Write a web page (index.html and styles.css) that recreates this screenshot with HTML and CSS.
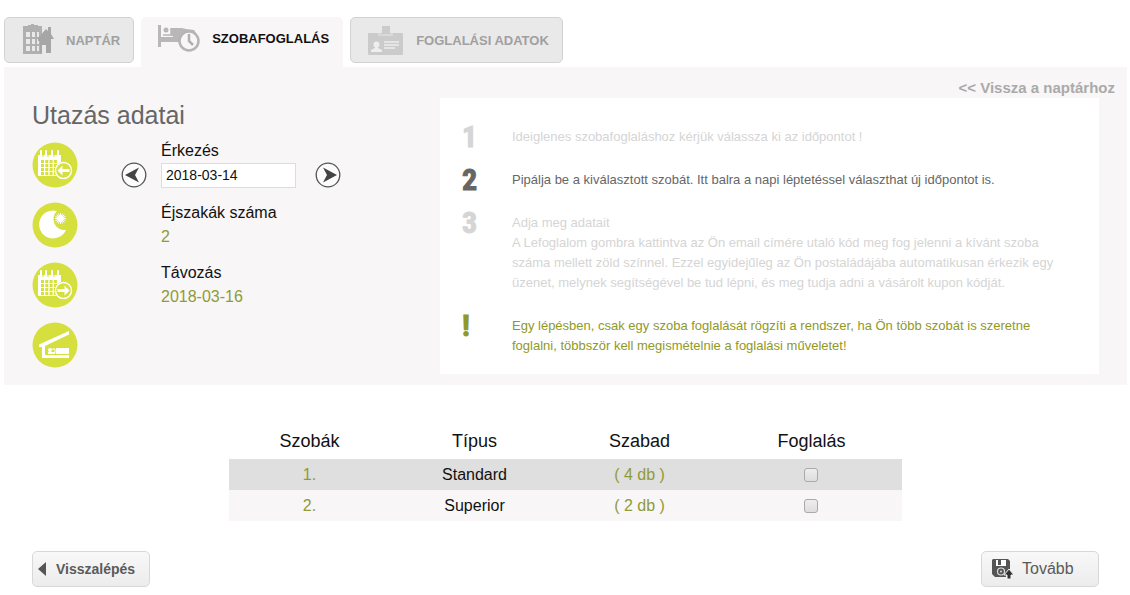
FILE: index.html
```html
<!DOCTYPE html>
<html lang="hu">
<head>
    <meta charset="UTF-8">
    <meta name="viewport" content="width=device-width, initial-scale=1.0">
    <title>Szobafoglalás</title>
    <link rel="stylesheet" href="styles.css">
</head>
<body>
    <nav class="tabs">
        <a class="tab" href="#naptar">
            <svg class="tab-icon" width="32" height="32" viewBox="0 0 32 32">
                <path fill="#b0b0b0" d="M1 2h5V1h3V0h3v1h4v1h4v28H1z"/>
                <path fill="#e9e9e9" d="M4 8h4v5H4zM10 8h3v5h-3zM15 8h2v5h-2zM4 15h4v5H4zM10 15h3v5h-3zM15 15h2v5h-2zM4 22h4v5H4zM10 22h3v5h-3zM15 22h2v5h-2z"/>
                <path fill="#a6a6a6" d="M16 14l8-9 2 2V3h3v7l3 5h-3v14h-5v-8h-4v8h-2V17h-2z"/>
            </svg>
            NAPTÁR
        </a>
        <a class="tab active" href="#szoba">
            <svg class="tab-icon" width="42" height="28" viewBox="0 0 42 28">
                <path fill="#b8b8b8" d="M0 1h3v12h19l3 5H3v5H0z"/>
                <path fill="#b8b8b8" d="M13 4h11l4 1 8 1 2 3H15v3h-2z"/>
                <path fill="#b8b8b8" d="M15 7h14v7H15z"/>
                <circle cx="8" cy="6" r="2.500" fill="#b8b8b8"/>
                <path fill="none" stroke="#b8b8b8" stroke-width="1.500" d="M5 11h8V4"/>
                <circle cx="31" cy="17" r="9.500" fill="#f8f6f7" stroke="#b5b5b5" stroke-width="2.500"/>
                <path fill="none" stroke="#b0b0b0" stroke-width="2.500" d="M31 10v7l4 4"/>
            </svg>
            SZOBAFOGLALÁS
        </a>
        <a class="tab" href="#adatok">
            <svg class="tab-icon" width="36" height="30" viewBox="0 0 36 30">
                <path fill="#cbcbcb" d="M14 1h8v10h-8z"/>
                <rect x="0" y="8" width="35" height="22" rx="1" fill="#cbcbcb"/>
                <path fill="none" stroke="#dedede" stroke-width="1.500" d="M11 8v2h13V8"/>
                <circle cx="8.500" cy="19.500" r="3" fill="#eee"/>
                <path fill="#eee" d="M7 21h3v2l4 2v2H3v-2l4-2z"/>
                <path fill="none" stroke="#eee" stroke-width="1.700" d="M16 17h15M16 20h15M16 23h11"/>
            </svg>
            FOGLALÁSI ADATOK
        </a>
    </nav>

    <section class="panel">
        <div class="back">
            <a href="#naptar">&lt;&lt; Vissza a naptárhoz</a>
        </div>
        <div class="panel-content">
            <div class="trip">
                <h2>Utazás adatai</h2>
                <div class="trip-row">
                    <svg class="round" viewBox="0 0 46 46">
                        <circle cx="23" cy="23" r="22.500" fill="#d5df3d"/>
                        <path fill="#fff" d="M6 13h23v21H6z"/>
                        <path fill="none" stroke="#d5df3d" stroke-width="3" stroke-dasharray="3 1.300" d="M9 19.500h17M9 23.500h17M9 27.500h17M9 31.500h17"/>
                        <path fill="none" stroke="#fff" stroke-width="2" stroke-linecap="round" d="M9 9v5M14 9v5M20 9v5M26 9v5"/>
                        <path fill="none" stroke="#d5df3d" d="M11 10v5M16 10v5M22 10v5"/>
                        <circle cx="31.500" cy="28.500" r="9" fill="#d5df3d"/>
                        <circle cx="31.500" cy="28.500" r="8" fill="#d5df3d" stroke="#fff" stroke-width="1.400"/>
                        <path fill="#fff" d="M25.500 28.500l5-5v3.500h7v3h-7v3.500z"/>
                    </svg>
                    <label for="arrival">Érkezés</label>
                    <button class="step-btn prev" type="button" aria-label="Előző nap">
                        <svg width="26" height="26" viewBox="0 0 26 26">
                            <circle cx="13" cy="13" r="11.800" fill="#fcfcfc" stroke="#555" stroke-width="1.300"/>
                            <path fill="#444" d="M4 13l14-7.500-4 7.500 4 7.500z"/>
                        </svg>
                    </button>
                    <input type="text" id="arrival" name="arrival" value="2018-03-14">
                    <button class="step-btn next" type="button" aria-label="Következő nap">
                        <svg width="26" height="26" viewBox="0 0 26 26">
                            <circle cx="13" cy="13" r="11.800" fill="#fcfcfc" stroke="#555" stroke-width="1.300"/>
                            <path fill="#444" d="M22 13L8 5.500l4 7.500-4 7.500z"/>
                        </svg>
                    </button>
                </div>
                <div class="trip-row">
                    <svg class="round" viewBox="0 0 46 46">
                        <circle cx="23" cy="23" r="22.500" fill="#d5df3d"/>
                        <path fill="#fff" d="M25 9A14 14 0 1 0 34 28A11 11 0 0 1 25 9z"/>
                        <circle cx="28.500" cy="16.500" r="3.300" fill="#fff"/>
                        <path stroke="#fff" d="M28.500 11v11M23 16.500h11M24.600 12.600l7.800 7.800M32.400 12.600l-7.800 7.800M26.400 11.500l4.200 10M30.600 11.500l-4.200 10M23.500 14.400l10 4.200M33.500 14.400l-10 4.200"/>
                    </svg>
                    <div class="trip-text">
                        <div>Éjszakák száma</div>
                        <div class="value">2</div>
                    </div>
                </div>
                <div class="trip-row">
                    <svg class="round" viewBox="0 0 46 46">
                        <circle cx="23" cy="23" r="22.500" fill="#d5df3d"/>
                        <path fill="#fff" d="M6 13h23v21H6z"/>
                        <path fill="none" stroke="#d5df3d" stroke-width="3" stroke-dasharray="3 1.300" d="M9 19.500h17M9 23.500h17M9 27.500h17M9 31.500h17"/>
                        <path fill="none" stroke="#fff" stroke-width="2" stroke-linecap="round" d="M9 9v5M14 9v5M20 9v5M26 9v5"/>
                        <path fill="none" stroke="#d5df3d" d="M11 10v5M16 10v5M22 10v5"/>
                        <circle cx="31.500" cy="28.500" r="9" fill="#d5df3d"/>
                        <circle cx="31.500" cy="28.500" r="8" fill="#d5df3d" stroke="#fff" stroke-width="1.400"/>
                        <path fill="#fff" d="M37.500 28.500l-5-5v3.500h-7v3h7v3.500z"/>
                    </svg>
                    <div class="trip-text">
                        <div>Távozás</div>
                        <div class="value">2018-03-16</div>
                    </div>
                </div>
                <div class="trip-row">
                    <svg class="round" viewBox="0 0 46 46">
                        <circle cx="23" cy="23" r="22.500" fill="#d5df3d"/>
                        <path fill="#fff" d="M7 22.500L37 9v3.500L13 24v9h24v3H10V25H7z"/>
                        <path fill="#fff" d="M24 26h13v6H24zM16 30h7v2h-7z"/>
                        <circle cx="18" cy="28" r="2" fill="#fff"/>
                        <path fill="none" stroke="#fff" d="M20 27h3v4"/>
                    </svg>
                </div>
            </div>

            <div class="steps">
                <div class="step">
                    <div class="num">1</div>
                    <div>Ideiglenes szobafoglaláshoz kérjük válassza ki az időpontot !</div>
                </div>
                <div class="step current">
                    <div class="num">2</div>
                    <div>Pipálja be a kiválasztott szobát. Itt balra a napi léptetéssel választhat új időpontot is.</div>
                </div>
                <div class="step">
                    <div class="num">3</div>
                    <div>Adja meg adatait<br>A Lefoglalom gombra kattintva az Ön email címére utaló kód meg fog jelenni a kívánt szoba száma mellett zöld színnel. Ezzel egyidejűleg az Ön postaládájába automatikusan érkezik egy üzenet, melynek segítségével be tud lépni, és meg tudja adni a vásárolt kupon kódját.</div>
                </div>
                <div class="step warning">
                    <div class="num">!</div>
                    <div>Egy lépésben, csak egy szoba foglalását rögzíti a rendszer, ha Ön több szobát is szeretne foglalni, többször kell megismételnie a foglalási műveletet!</div>
                </div>
            </div>
        </div>
    </section>

    <table class="rooms">
        <thead>
            <tr>
                <th class="col-room">Szobák</th>
                <th class="col-type">Típus</th>
                <th class="col-free">Szabad</th>
                <th class="col-book">Foglalás</th>
            </tr>
        </thead>
        <tbody>
            <tr>
                <td class="value">1.</td>
                <td>Standard</td>
                <td class="value">( 4 db )</td>
                <td><input type="checkbox" name="room1" aria-label="Standard foglalása"></td>
            </tr>
            <tr>
                <td class="value">2.</td>
                <td>Superior</td>
                <td class="value">( 2 db )</td>
                <td><input type="checkbox" name="room2" aria-label="Superior foglalása"></td>
            </tr>
        </tbody>
    </table>

    <div class="actions">
        <button class="btn btn-back" type="button">
            <svg width="8" height="16" viewBox="0 0 8 16"><path fill="#555" d="M8 1v14L0 8z"/></svg>
            Visszalépés
        </button>
        <button class="btn btn-next" type="button">
            <svg width="22" height="20" viewBox="0 0 22 20">
                <path fill="#555" d="M1 0h15l2 2v9l-4 4v3H3l-3-3V1z"/>
                <path fill="#fff" d="M4 1h10v6H4z"/>
                <path fill="#555" d="M6 1h3v5H6z"/>
                <circle cx="9" cy="12.500" r="3.500" fill="#555" stroke="#ddd" stroke-width="1.200"/>
                <circle cx="9" cy="12.500" r="1" fill="#ddd"/>
                <path fill="#333" stroke="#f3f3f3" d="M17 10l5 6h-3v4h-4v-4h-3z"/>
            </svg>
            Tovább
        </button>
    </div>
</body>
</html>
```
FILE: styles.css
```css
* {
    box-sizing: border-box;
}
body {
    margin: 0;
    padding: 17px 3px 8px 4px;
    background-color: #fff;
    color: #111;
    font-family: "Liberation Sans", Arial, sans-serif;
    font-size: 16px;
}
.tabs {
    display: flex;
    align-items: flex-start;
    gap: 7px;
}
.tab {
    display: flex;
    align-items: center;
    gap: 12px;
    height: 46px;
    padding: 0 13px 0 17px;
    border: 1px solid #d2d2d2;
    border-radius: 5px;
    background-color: #e9e9e9;
    color: #a0a0a0;
    font-size: 13px;
    font-weight: bold;
    text-decoration: none;
}
.tab.active {
    height: 50px;
    padding: 0 13px 8px 16px;
    border-color: #f8f6f7;
    border-radius: 5px 5px 0 0;
    background-color: #f8f6f7;
    color: #111;
}
.panel {
    padding: 0 28px 11px;
    background-color: #f8f6f7;
}
.back {
    height: 31px;
    margin-right: -16px;
    padding-top: 12px;
    line-height: 18px;
    text-align: right;
}
.back a {
    color: #aaa;
    font-size: 15px;
    font-weight: bold;
    text-decoration: none;
}
.panel-content {
    display: flex;
}
.trip {
    flex: 0 0 408px;
}
.trip h2 {
    margin: 0 0 9px;
    color: #666;
    font-size: 25px;
    font-weight: normal;
    line-height: 34px;
}
.trip-row {
    display: grid;
    grid-template-columns: 89px 40px 135px 45px;
    grid-template-rows: 20px 28px;
    align-items: center;
    margin-bottom: 12px;
}
.trip-row:last-child {
    margin-bottom: 0;
}
.round {
    grid-row: 1 / 3;
    width: 46px;
    height: 46px;
}
.trip-row label {
    grid-column: 3;
    line-height: 20px;
}
.trip-row input {
    grid-column: 3;
    width: 100%;
    height: 25px;
    padding: 0 4px;
    border: 1px solid #ddd;
    background-color: #fff;
    color: #111;
    font-family: inherit;
    font-size: 14px;
}
.trip-text {
    grid-column: 3;
    grid-row: 1 / 3;
    line-height: 24px;
    white-space: nowrap;
}
.value {
    color: #8f9b35;
}
.step-btn {
    width: 26px;
    height: 26px;
    padding: 0;
    border: none;
    background: none;
}
.step-btn svg {
    display: block;
}
.prev {
    grid-column: 2;
}
.next {
    grid-column: 4;
    justify-self: end;
}
.steps {
    flex: 1;
    padding: 29px 22px 18px;
    background-color: #fff;
    color: #d5d5d5;
    font-size: 13px;
    line-height: 20px;
}
.step {
    display: grid;
    grid-template-columns: 50px 1fr;
    margin-bottom: 23px;
}
.step:last-child {
    margin-bottom: 0;
}
.num {
    font-family: Impact, "Roboto Condensed", "Liberation Sans", sans-serif;
    font-size: 30px;
    font-weight: bold;
    -webkit-text-stroke: 1px;
}
.current {
    color: #666;
}
.warning {
    color: #8f9926;
}
.rooms {
    width: 60%;
    margin: 38px auto 30px;
    border-collapse: collapse;
    text-align: center;
}
.rooms th {
    height: 36px;
    padding: 0;
    font-size: 18px;
    font-weight: normal;
}
.rooms td {
    height: 31px;
    padding: 1px 0 0;
    background-color: #f8f6f7;
}
.rooms tbody tr:first-child td {
    background-color: #dfdfdf;
}
.col-room {
    width: 24%;
}
.col-type {
    width: 25%;
}
.col-free {
    width: 24%;
}
.col-book {
    width: 27%;
}
.rooms input {
    display: block;
    width: 14px;
    height: 14px;
    margin: 0 auto;
    appearance: none;
    border: 1px solid #aaa;
    border-radius: 3px;
    background: linear-gradient(#eee, #ddd);
}
.actions {
    display: flex;
    justify-content: space-between;
    padding: 0 28px;
}
.btn {
    display: flex;
    align-items: center;
    width: 118px;
    height: 36px;
    border: 1px solid #d8d8d8;
    border-radius: 5px;
    background: linear-gradient(#f8f8f8, #ececec);
    color: #5a5a5a;
    font-family: inherit;
}
.btn-back {
    gap: 10px;
    padding: 0 5px;
    font-size: 14px;
    font-weight: bold;
}
.btn-next {
    gap: 8px;
    padding: 0 10px;
    font-size: 16px;
}
```
